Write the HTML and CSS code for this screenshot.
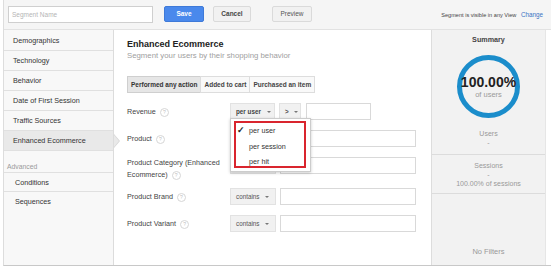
FILE: index.html
```html
<!DOCTYPE html>
<html lang="en">
<head>
    <meta charset="UTF-8">
    <title>Segment - Enhanced Ecommerce</title>
    <link rel="stylesheet" href="styles.css">
</head>
<body>

<div class="app">
    <div class="topbar">
        <div class="seg-name">Segment Name</div>
        <div class="btn btn-save">Save</div>
        <div class="btn btn-cancel">Cancel</div>
        <div class="btn btn-preview">Preview</div>
        <div class="visibility">Segment is visible in any View <span class="link">Change</span></div>
    </div>

    <div class="content">
        <div class="sidebar">
            <ul class="nav">
                <li>Demographics</li>
                <li>Technology</li>
                <li>Behavior</li>
                <li>Date of First Session</li>
                <li>Traffic Sources</li>
                <li class="selected">Enhanced Ecommerce</li>
            </ul>
            <div class="nav-label">Advanced</div>
            <ul class="nav nav-adv">
                <li>Conditions</li>
                <li class="last">Sequences</li>
            </ul>
        </div>

        <div class="main">
            <h2 class="title">Enhanced Ecommerce</h2>
            <p class="subtitle">Segment your users by their shopping behavior</p>

            <div class="tabs">
                <div class="tab active">Performed any action</div>
                <div class="tab">Added to cart</div>
                <div class="tab">Purchased an item</div>
            </div>

            <div class="rows">
                <div class="row">
                    <div class="label">Revenue <span class="help">?</span></div>
                    <div class="select sel-per">per user <span class="caret"></span></div>
                    <div class="select sel-op">&gt; <span class="caret"></span></div>
                    <div class="field field-small"></div>
                </div>
                <!-- the open menu covers the operator selects of the next two rows -->
                <div class="row">
                    <div class="label">Product <span class="help">?</span></div>
                    <div class="select"></div>
                    <div class="field"></div>
                </div>
                <div class="row row-tall">
                    <div class="label">Product Category (Enhanced<br>Ecommerce) <span class="help">?</span></div>
                    <div class="select"></div>
                    <div class="field"></div>
                </div>
                <div class="row">
                    <div class="label">Product Brand <span class="help">?</span></div>
                    <div class="select">contains <span class="caret"></span></div>
                    <div class="field"></div>
                </div>
                <div class="row">
                    <div class="label">Product Variant <span class="help">?</span></div>
                    <div class="select">contains <span class="caret"></span></div>
                    <div class="field"></div>
                </div>
            </div>

            <div class="menu">
                <ul class="menu-list">
                    <li class="checked">per user</li>
                    <li>per session</li>
                    <li>per hit</li>
                </ul>
            </div>
        </div>

        <div class="summary">
            <div class="summary-title">Summary</div>
            <div class="ring">
                <div class="ring-value">100.00%</div>
                <div class="ring-label">of users</div>
            </div>
            <div class="stat stat-users">
                <div>Users</div>
                <div>-</div>
            </div>
            <div class="stat stat-sessions">
                <div>Sessions</div>
                <div>-</div>
                <div>100.00% of sessions</div>
            </div>
            <div class="no-filters">No Filters</div>
        </div>
    </div>
</div>

</body>
</html>
```

FILE: styles.css
```css
body {
    margin: 0;
    background-color: #ffffff;
    font-family: 'Liberation Sans', Arial, sans-serif;
    font-size: 7.2px;
    color: #333333;
}

.app {
    width: 548px;
    height: 266px;
    margin-left: 3px;
    box-sizing: border-box;
    border-left: 1px solid #dddddd;
    border-bottom: 1px solid #c8c8c8;
    display: flex;
    flex-direction: column;
}

/* top bar */

.topbar {
    height: 30px;
    box-sizing: border-box;
    background-color: #f5f5f5;
    border-bottom: 1px solid #e2e2e2;
    display: flex;
    align-items: center;
    padding-left: 4px;
    padding-bottom: 1px;
}

.seg-name {
    width: 145px;
    height: 17px;
    box-sizing: border-box;
    background-color: #ffffff;
    border: 1px solid #cfcfcf;
    color: #b5b5b5;
    line-height: 15px;
    padding-left: 3px;
    font-size: 6.5px;
}

.btn {
    height: 16px;
    box-sizing: border-box;
    border: 1px solid #dadada;
    background-color: #f1f1f1;
    border-radius: 2px;
    color: #444444;
    font-weight: bold;
    font-size: 6.5px;
    line-height: 14px;
    text-align: center;
}

.btn-save {
    width: 40px;
    margin-left: 11px;
    background-color: #4a89ec;
    border-color: #3f7ad8;
    color: #ffffff;
}

.btn-cancel {
    width: 38px;
    margin-left: 9px;
}

.btn-preview {
    width: 40px;
    margin-left: 21px;
    font-weight: normal;
    color: #555555;
}

.visibility {
    margin-left: auto;
    margin-right: 8px;
    font-size: 5.6px;
    color: #444444;
}

.visibility .link {
    font-size: 6.3px;
    color: #3a73c4;
    margin-left: 3px;
}

/* body */

.content {
    flex: 1;
    display: flex;
}

.sidebar {
    width: 109px;
    background-color: #f8f8f8;
    border-right: 1px solid #dcdcdc;
    padding-top: 1px;
}

.nav {
    list-style: none;
    margin: 0;
    padding: 0;
}

.nav li {
    position: relative;
    height: 20px;
    box-sizing: border-box;
    border-bottom: 1px solid #e0e0e0;
    line-height: 19px;
    padding-left: 9px;
    color: #333333;
}

.nav li.selected {
    background-color: #e9e9e9;
}

.nav li.selected::before {
    content: "";
    position: absolute;
    right: -7px;
    top: 3px;
    width: 0;
    height: 0;
    border-top: 7px solid transparent;
    border-bottom: 7px solid transparent;
    border-left: 6px solid #d6d6d6;
    z-index: 2;
}

.nav li.selected::after {
    content: "";
    position: absolute;
    right: -6px;
    top: 4px;
    width: 0;
    height: 0;
    border-top: 6px solid transparent;
    border-bottom: 6px solid transparent;
    border-left: 5px solid #e9e9e9;
    z-index: 2;
}

.nav-label {
    height: 22px;
    box-sizing: border-box;
    padding-top: 11px;
    padding-left: 3px;
    line-height: 9px;
    color: #9a9a9a;
    font-size: 6.8px;
    border-bottom: 1px solid #e0e0e0;
}

.nav-adv li {
    height: 19px;
    line-height: 19px;
    padding-left: 11px;
}

.nav-adv li.last {
    border-bottom: none;
}

/* main */

.main {
    position: relative;
    width: 304px;
    padding: 8px 0 0 13px;
    background-color: #ffffff;
}

.title {
    margin: 0;
    font-size: 9px;
    line-height: 13px;
    font-weight: bold;
    color: #222222;
}

.subtitle {
    margin: 0;
    font-size: 7.8px;
    line-height: 10px;
    color: #a0a0a0;
}

.tabs {
    display: flex;
    margin-top: 15px;
    height: 17px;
}

.tab {
    height: 17px;
    box-sizing: border-box;
    border: 1px solid #dddddd;
    margin-left: -1px;
    padding: 0 3px;
    line-height: 15px;
    font-size: 6.5px;
    font-weight: bold;
    color: #444444;
    background-color: #f9f9f9;
}

.tab:first-child {
    margin-left: 0;
}

.tab.active {
    background-color: #e6e6e6;
    border-color: #cfcfcf;
    color: #333333;
}

.rows {
    margin-top: 10px;
}

.row {
    display: flex;
    align-items: flex-start;
    margin-bottom: 10px;
}

.row-tall {
    margin-bottom: 7px;
}

.label {
    width: 103px;
    line-height: 17px;
    color: #444444;
    white-space: nowrap;
}

.row-tall .label {
    line-height: 12px;
}

.help {
    display: inline-block;
    width: 7px;
    height: 7px;
    border: 1px solid #d6d6d6;
    border-radius: 50%;
    font-size: 5px;
    line-height: 7px;
    text-align: center;
    color: #c0c0c0;
    vertical-align: middle;
    margin-left: 2px;
}

.select {
    width: 46px;
    height: 17px;
    box-sizing: border-box;
    background-color: #f1f1f1;
    border: 1px solid #e2e2e2;
    line-height: 15px;
    padding-left: 5px;
    font-size: 6.3px;
    color: #555555;
}

.select.sel-per {
    width: 45px;
    font-weight: bold;
    color: #444444;
}

.select.sel-op {
    width: 22px;
    margin-left: 4px;
    font-weight: bold;
}

.caret {
    display: inline-block;
    width: 0;
    height: 0;
    border-left: 2px solid transparent;
    border-right: 2px solid transparent;
    border-top: 2px solid #777777;
    vertical-align: middle;
    margin-left: 4px;
}

.field {
    width: 136px;
    height: 17px;
    box-sizing: border-box;
    border: 1px solid #d9d9d9;
    background-color: #ffffff;
    margin-left: 4px;
}

.field-small {
    width: 65px;
    margin-left: 5px;
}

/* dropdown */

.menu {
    position: absolute;
    left: 116px;
    top: 88px;
    width: 81px;
    height: 54px;
    box-sizing: border-box;
    background-color: #ffffff;
    border: 1px solid #cccccc;
    box-shadow: 0 1px 3px rgba(0, 0, 0, 0.2);
    padding: 2px 4px 3px 3px;
    z-index: 5;
}

.menu-list {
    list-style: none;
    margin: 0;
    padding: 0;
    height: 100%;
    box-sizing: border-box;
    border: 2px solid #d9252e;
}

.menu-list li {
    position: relative;
    height: 15.5px;
    line-height: 15px;
    padding-left: 13px;
    color: #333333;
}

.menu-list li.checked::before {
    content: "✓";
    position: absolute;
    left: 1px;
    top: 0;
    font-size: 9px;
    font-weight: bold;
    color: #222222;
}

/* summary */

.summary {
    width: 113px;
    background-color: #f2f2f2;
    border-left: 1px solid #dddddd;
    border-right: 1px solid #e6e6e6;
    text-align: center;
    color: #999999;
}

.summary-title {
    margin-top: 5px;
    font-weight: bold;
    color: #444444;
    line-height: 10px;
}

.ring {
    width: 63px;
    height: 63px;
    box-sizing: border-box;
    border: 5px solid #1b8dcb;
    border-radius: 50%;
    margin: 10px auto 0 auto;
    display: flex;
    flex-direction: column;
    align-items: center;
    justify-content: center;
}

.ring-value {
    font-size: 14px;
    font-weight: bold;
    color: #222222;
    line-height: 15px;
    margin-top: 2px;
}

.ring-label {
    font-size: 7.5px;
    color: #9a9a9a;
    line-height: 10px;
}

.stat {
    border-bottom: 1px solid #dcdcdc;
    line-height: 9px;
    font-size: 7px;
}

.stat-users {
    padding-top: 11px;
    padding-bottom: 7px;
}

.stat-sessions {
    padding-top: 6px;
    padding-bottom: 5px;
}

.no-filters {
    margin-top: 53px;
    line-height: 10px;
    font-size: 7.5px;
    color: #999999;
}
```
